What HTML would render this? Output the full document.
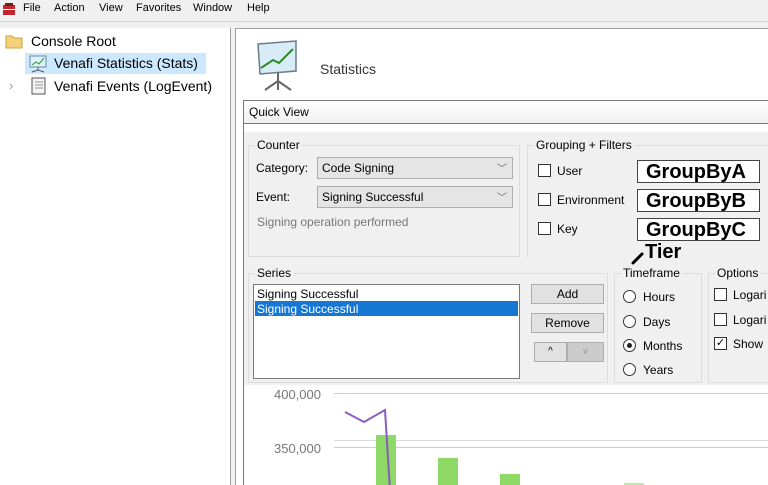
<!DOCTYPE html>
<html><head><style>
*{margin:0;padding:0;box-sizing:border-box}
body{width:768px;height:485px;overflow:hidden;background:#f0f0f0;font-family:"Liberation Sans",sans-serif;font-size:12px;color:#000;position:relative}
.a{position:absolute}
.t{font-family:"Liberation Sans",sans-serif;white-space:nowrap}
.fs{position:absolute;border:1px solid #dcdcdc}
.lg{position:absolute;background:#f0f0f0;padding:0 2px;top:-8px;left:6px;font-size:12px}
.cb{position:absolute;width:13px;height:13px;border:1px solid #333;background:#fff}
.rb{position:absolute;width:13px;height:13px;border:1px solid #333;border-radius:50%;background:#fff}
.sel{position:absolute;height:22px;border:1px solid #adadad;background:#e5e5e5;padding:3px 4px;font-size:12px}
.btn{position:absolute;height:20px;border:1px solid #adadad;background:#e1e1e1;text-align:center;font-size:12px;line-height:18px}
.gb{position:absolute;width:123px;height:23px;border:1px solid #444;background:#fff;font-weight:bold;font-size:20px;line-height:22px;padding-left:8px;font-family:"Liberation Sans",sans-serif}
.m{font-size:11px;top:2px}
</style></head><body>
<div class="a" style="left:0;top:0;width:768px;height:18px;background:#f0f0f0"></div>
<svg class="a" style="left:2px;top:2px" width="14" height="14"><rect x="1" y="3" width="12" height="10" fill="#c0272d"/><rect x="3" y="1" width="8" height="3" fill="#7a1a1a"/><rect x="1" y="7" width="12" height="1" fill="#fff"/></svg>
<div class="a t m" style="left:23px">File</div>
<div class="a t m" style="left:54px">Action</div>
<div class="a t m" style="left:99px">View</div>
<div class="a t m" style="left:136px">Favorites</div>
<div class="a t m" style="left:193px">Window</div>
<div class="a t m" style="left:247px">Help</div>
<div class="a" style="left:0;top:21px;width:768px;height:1px;background:#d0d0d0"></div>
<div class="a" style="left:0;top:28px;width:231px;height:457px;background:#fff;border-right:1px solid #a0a0a0"></div>
<svg class="a" style="left:5px;top:33px" width="18" height="16"><path d="M1 3h6l2 2h8v10H1z" fill="#f3d27a" stroke="#c9a440"/></svg>
<div class="a t" style="left:31px;top:33px;font-size:14px">Console Root</div>
<div class="a" style="left:25px;top:53px;width:181px;height:21px;background:#cce8ff"></div>
<svg class="a" style="left:28px;top:55px" width="20" height="18"><rect x="2" y="1" width="16" height="11" fill="#dff0fb" stroke="#6a8aa0"/><path d="M4 10l4-3 3 2 5-6" stroke="#2a9a2a" fill="none"/><path d="M10 12v3M4 17l6-2 6 2" stroke="#555" fill="none"/></svg>
<div class="a t" style="left:54px;top:55px;font-size:14px">Venafi Statistics (Stats)</div>
<div class="a t" style="left:9px;top:78px;font-size:13px;color:#999">›</div>
<svg class="a" style="left:29px;top:77px" width="18" height="18"><rect x="3" y="1" width="13" height="16" fill="#f4f4f4" stroke="#555"/><path d="M6 5h8M6 8h8M6 11h8" stroke="#999"/></svg>
<div class="a t" style="left:54px;top:78px;font-size:14px">Venafi Events (LogEvent)</div>
<div class="a" style="left:235px;top:28px;width:533px;height:457px;background:#fff;border-left:1px solid #a0a0a0;border-top:1px solid #a0a0a0"></div>
<svg class="a" style="left:255px;top:40px" width="48" height="52"><path d="M3 4l38-3 0 30-36 3z" fill="#d8ecf8" stroke="#6a7a88" stroke-width="1.5"/><path d="M6 28l12-8 6 3 14-14" stroke="#2a8a2a" stroke-width="2" fill="none"/><path d="M23 33v8M10 50l13-9 13 9M23 41v9" stroke="#666" stroke-width="2" fill="none"/></svg>
<div class="a t" style="left:320px;top:61px;font-size:14px;color:#333">Statistics</div>
<div class="a" style="left:243px;top:100px;width:525px;height:24px;background:linear-gradient(#fff,#f0f0f0);border-top:1px solid #777;border-bottom:1px solid #777;border-left:1px solid #777"></div>
<div class="a t" style="left:249px;top:105px">Quick View</div>
<div class="a" style="left:243px;top:124px;width:1px;height:361px;background:#777"></div>
<div class="a" style="left:244px;top:132px;width:524px;height:253px;background:#f0f0f0"></div>
<div class="fs" style="left:248px;top:145px;width:272px;height:112px"><span class="lg">Counter</span></div>
<div class="a t" style="left:256px;top:161px">Category:</div>
<div class="sel" style="left:317px;top:157px;width:196px">Code Signing<span style="position:absolute;right:5px;top:2px;color:#666;font-size:10px">﹀</span></div>
<div class="a t" style="left:256px;top:190px">Event:</div>
<div class="sel" style="left:317px;top:186px;width:196px">Signing Successful<span style="position:absolute;right:5px;top:2px;color:#666;font-size:10px">﹀</span></div>
<div class="a t" style="left:257px;top:215px;color:#777">Signing operation performed</div>
<div class="fs" style="left:527px;top:145px;width:245px;height:112px;border-bottom:none"><span class="lg">Grouping + Filters</span></div>
<div class="cb" style="left:538px;top:164px"></div><div class="a t" style="left:557px;top:164px">User</div>
<div class="cb" style="left:538px;top:193px"></div><div class="a t" style="left:557px;top:193px">Environment</div>
<div class="cb" style="left:538px;top:222px"></div><div class="a t" style="left:557px;top:222px">Key</div>
<div class="gb" style="left:637px;top:160px">GroupByA</div>
<div class="gb" style="left:637px;top:189px">GroupByB</div>
<div class="gb" style="left:637px;top:218px">GroupByC</div>
<div class="a t" style="left:645px;top:241px;font-weight:bold;font-size:20px">Tier</div>
<svg class="a" style="left:630px;top:250px" width="16" height="16"><path d="M3 13L12 4" stroke="#000" stroke-width="3" stroke-linecap="round"/></svg>
<div class="fs" style="left:248px;top:273px;width:360px;height:110px"><span class="lg">Series</span></div>
<div class="a" style="left:253px;top:284px;width:267px;height:95px;background:#fff;border:1px solid #7a7a7a"></div>
<div class="a t" style="left:257px;top:287px">Signing Successful</div>
<div class="a" style="left:255px;top:301px;width:263px;height:15px;background:#1677d2"></div>
<div class="a t" style="left:257px;top:302px;color:#fff">Signing Successful</div>
<div class="btn" style="left:531px;top:284px;width:73px">Add</div>
<div class="btn" style="left:531px;top:313px;width:73px">Remove</div>
<div class="btn" style="left:534px;top:342px;width:33px;font-size:10px">^</div>
<div class="btn" style="left:567px;top:342px;width:37px;background:#ccc;color:#999;font-size:10px">v</div>
<div class="fs" style="left:614px;top:273px;width:88px;height:110px"><span class="lg">Timeframe</span></div>
<div class="rb" style="left:623px;top:290px"></div><div class="a t" style="left:643px;top:290px">Hours</div>
<div class="rb" style="left:623px;top:315px"></div><div class="a t" style="left:643px;top:315px">Days</div>
<div class="rb" style="left:623px;top:339px"><div style="position:absolute;left:3px;top:3px;width:5px;height:5px;border-radius:50%;background:#222"></div></div><div class="a t" style="left:643px;top:339px">Months</div>
<div class="rb" style="left:623px;top:363px"></div><div class="a t" style="left:643px;top:363px">Years</div>
<div class="fs" style="left:708px;top:273px;width:70px;height:110px"><span class="lg">Options</span></div>
<div class="cb" style="left:714px;top:288px"></div><div class="a t" style="left:733px;top:288px">Logari</div>
<div class="cb" style="left:714px;top:313px"></div><div class="a t" style="left:733px;top:313px">Logari</div>
<div class="cb" style="left:714px;top:337px;font-size:11px;line-height:11px;text-align:center">✓</div><div class="a t" style="left:733px;top:337px">Show</div>
<div class="a t" style="left:274px;top:387px;font-size:13px;color:#777">400,000</div>
<div class="a" style="left:334px;top:393px;width:434px;height:1px;background:#ccc"></div>
<div class="a t" style="left:274px;top:441px;font-size:13px;color:#777">350,000</div>
<div class="a" style="left:334px;top:440px;width:434px;height:1px;background:#ddd"></div>
<div class="a" style="left:334px;top:447px;width:434px;height:1px;background:#ccc"></div>
<div class="a" style="left:376px;top:435px;width:20px;height:50px;background:#8fd966"></div>
<div class="a" style="left:438px;top:458px;width:20px;height:27px;background:#8fd966"></div>
<div class="a" style="left:500px;top:474px;width:20px;height:11px;background:#8fd966"></div>
<div class="a" style="left:624px;top:483px;width:20px;height:2px;background:#bde8a6"></div>
<svg class="a" style="left:340px;top:405px" width="60" height="80"><path d="M5 7l19 10 21-12 5 80" stroke="#8a5cc0" stroke-width="2" fill="none"/></svg>
</body></html>
